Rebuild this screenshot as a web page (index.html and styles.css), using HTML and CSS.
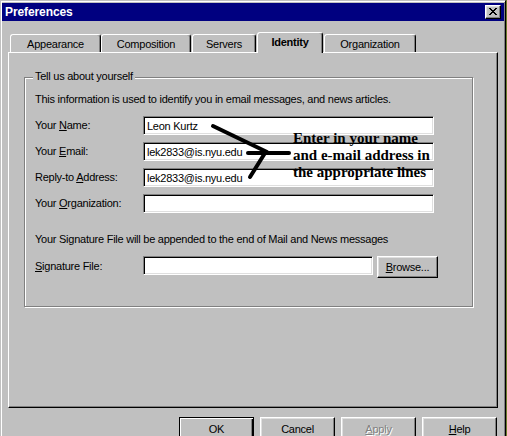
FILE: index.html
```html
<!DOCTYPE html>
<html>
<head>
<meta charset="utf-8">
<title>Preferences</title>
<link rel="stylesheet" href="styles.css">
</head>
<body>
<div class="screen">
  <div class="window">
    <div class="titlebar">
      <span class="title">Preferences</span>
      <span class="close">
        <svg width="8" height="7" viewBox="0 0 8 7"><path d="M0 0h2v1H0zM6 0h2v1H6zM1 1h2v1H1zM5 1h2v1H5zM2 2h4v1H2zM3 3h2v1H3zM2 4h4v1H2zM1 5h2v1H1zM5 5h2v1H5zM0 6h2v1H0zM6 6h2v1H6z" fill="#000"/></svg>
      </span>
    </div>
    <div class="tabs">
      <div class="tab tab-appearance">Appearance</div>
      <div class="tab tab-composition">Composition</div>
      <div class="tab tab-servers">Servers</div>
      <div class="tab tab-identity selected">Identity</div>
      <div class="tab tab-organization">Organization</div>
    </div>
    <div class="panel">
      <div class="groupbox">
        <div class="legend">Tell us about yourself</div>
        <div class="intro">This information is used to identify you in email messages, and news articles.</div>
        <div class="fields">
          <div class="row"><label class="label">Your <u>N</u>ame:</label><input class="field" type="text" value="Leon Kurtz"></div>
          <div class="row"><label class="label">Your <u>E</u>mail:</label><input class="field" type="text" value="lek2833@is.nyu.edu"></div>
          <div class="row"><label class="label">Reply-to <u>A</u>ddress:</label><input class="field" type="text" value="lek2833@is.nyu.edu"></div>
          <div class="row"><label class="label">Your <u>O</u>rganization:</label><input class="field" type="text" value=""></div>
        </div>
        <div class="sig-note">Your Signature File will be appended to the end of Mail and News messages</div>
        <div class="row sig-row">
          <label class="label"><u>S</u>ignature File:</label>
          <input class="field field-sig" type="text" value="">
          <button class="btn btn-browse"><u>B</u>rowse...</button>
        </div>
      </div>
    </div>
    <div class="buttons">
      <button class="btn btn-dlg btn-default">OK</button>
      <button class="btn btn-dlg">Cancel</button>
      <button class="btn btn-dlg btn-disabled"><u>A</u>pply</button>
      <button class="btn btn-dlg"><u>H</u>elp</button>
    </div>
  </div>
  <svg class="arrows" width="507" height="436" viewBox="0 0 507 436">
    <g stroke="#000" stroke-width="4" stroke-linecap="round" fill="none">
      <line x1="213" y1="126" x2="267" y2="152"/>
      <line x1="248" y1="153" x2="289" y2="153"/>
      <line x1="250" y1="177" x2="265" y2="153"/>
    </g>
  </svg>
  <div class="note">
    <div>Enter in your name</div>
    <div>and e-mail address in</div>
    <div>the appropriate lines</div>
  </div>
</div>
</body>
</html>
```
FILE: styles.css
```css
* { box-sizing: border-box; }
html, body { margin: 0; padding: 0; }
body {
  background: #6b7b2a;
  font-family: "Liberation Sans", Arial, sans-serif;
  font-size: 11px;
  letter-spacing: -0.25px;
  color: #000;
}
.screen {
  position: relative;
  width: 507px;
  height: 436px;
  overflow: hidden;
}
.window {
  width: 506px;
  height: 450px;
  background: #c0c0c0;
  border: 1px solid;
  border-color: #c0c0c0 #000 #000 #c0c0c0;
  box-shadow: inset 1px 1px 0 #fff, inset -1px -1px 0 #808080;
  padding: 2px 1px 0 1px;
}
.titlebar {
  height: 18px;
  background: #000080;
  display: flex;
  align-items: center;
  justify-content: space-between;
  padding: 0 3px 0 3px;
}
.title {
  color: #fff;
  font-weight: bold;
  font-size: 12px;
  letter-spacing: -0.1px;
}
.close {
  width: 16px;
  height: 14px;
  background: #c0c0c0;
  border: 1px solid;
  border-color: #fff #000 #000 #fff;
  box-shadow: inset -1px -1px 0 #808080, inset 1px 1px 0 #dfdfdf;
  display: flex;
  align-items: center;
  justify-content: center;
  padding: 0 1px 1px 0;
}
.close svg { display: block; }
.tabs {
  display: flex;
  align-items: flex-end;
  height: 20px;
  margin: 11px 0 0 8px;
  position: relative;
  z-index: 1;
}
.tab {
  height: 18px;
  border: 1px solid;
  border-bottom: none;
  border-color: #fff #000 transparent #fff;
  border-radius: 3px 3px 0 0;
  box-shadow: inset -1px 0 0 #808080;
  background: #c0c0c0;
  text-align: center;
  line-height: 16px;
  padding-top: 1px;
}
.tab-appearance { width: 91px; }
.tab-composition { width: 90px; }
.tab-servers { width: 64px; margin-left: 1px; }
.tab-identity { width: 66px; margin-left: 1px; }
.tab-organization { width: 92px; margin-left: 1px; }
.tab.selected {
  height: 21px;
  margin-bottom: -1px;
  font-weight: bold;
  line-height: 18px;
  padding-top: 0;
}
.panel {
  margin-left: 6px;
  width: 490px;
  height: 356px;
  border: 1px solid;
  border-color: #fff #000 #000 #fff;
  box-shadow: inset -1px -1px 0 #808080;
  padding: 24px 0 0 15px;
}
.groupbox {
  width: 449px;
  height: 230px;
  border: 1px solid #808080;
  box-shadow: inset 1px 1px 0 #fff, 1px 1px 0 #fff;
  padding: 0 10px;
  display: flex;
  flex-direction: column;
}
.legend {
  align-self: flex-start;
  margin: -8px 0 0 -2px;
  padding: 0 2px;
  background: #c0c0c0;
  line-height: 13px;
}
.intro {
  margin-top: 10px;
  line-height: 13px;
  white-space: nowrap;
}
.fields {
  display: flex;
  flex-direction: column;
  gap: 7px;
  margin-top: 10px;
}
.row {
  display: flex;
  align-items: center;
  height: 19px;
}
.label {
  width: 108px;
  flex: none;
  line-height: 13px;
}
.field {
  width: 291px;
  height: 19px;
  margin: 0;
  border: 1px solid;
  border-color: #808080 #fff #fff #808080;
  box-shadow: inset 1px 1px 0 #000, inset -1px -1px 0 #dfdfdf;
  background: #fff;
  padding: 0 2px 0 3px;
  font: inherit;
  letter-spacing: inherit;
  color: #000;
  outline: none;
}
.sig-note {
  margin-top: 20px;
  line-height: 13px;
  white-space: nowrap;
}
.sig-row {
  margin-top: 10px;
  height: 22px;
  align-items: flex-start;
}
.sig-row .label { line-height: 20px; }
.field-sig {
  width: 230px;
  margin-right: 4px;
}
.btn {
  margin: 0;
  padding: 0;
  background: #c0c0c0;
  border: 1px solid;
  border-color: #fff #000 #000 #fff;
  box-shadow: inset -1px -1px 0 #808080, inset 1px 1px 0 #dfdfdf;
  font: inherit;
  letter-spacing: inherit;
  color: #000;
  text-align: center;
}
.btn-browse {
  width: 61px;
  height: 22px;
}
.buttons {
  display: flex;
  justify-content: flex-end;
  gap: 6px;
  width: 489px;
  margin: 9px 0 0 6px;
}
.btn-dlg {
  width: 75px;
  height: 23px;
}
.btn-default {
  border-color: #000;
  box-shadow: inset 1px 1px 0 #fff, inset -1px -1px 0 #000, inset -2px -2px 0 #808080;
}
.btn-disabled {
  color: #808080;
  text-shadow: 1px 1px 0 #fff;
}
.arrows {
  position: absolute;
  left: 0;
  top: 0;
  pointer-events: none;
}
.note {
  position: absolute;
  left: 293px;
  top: 130px;
  font-family: "Liberation Serif", "Times New Roman", serif;
  font-weight: bold;
  font-size: 15px;
  line-height: 17px;
  letter-spacing: 0;
  white-space: nowrap;
  color: #000;
}
```
